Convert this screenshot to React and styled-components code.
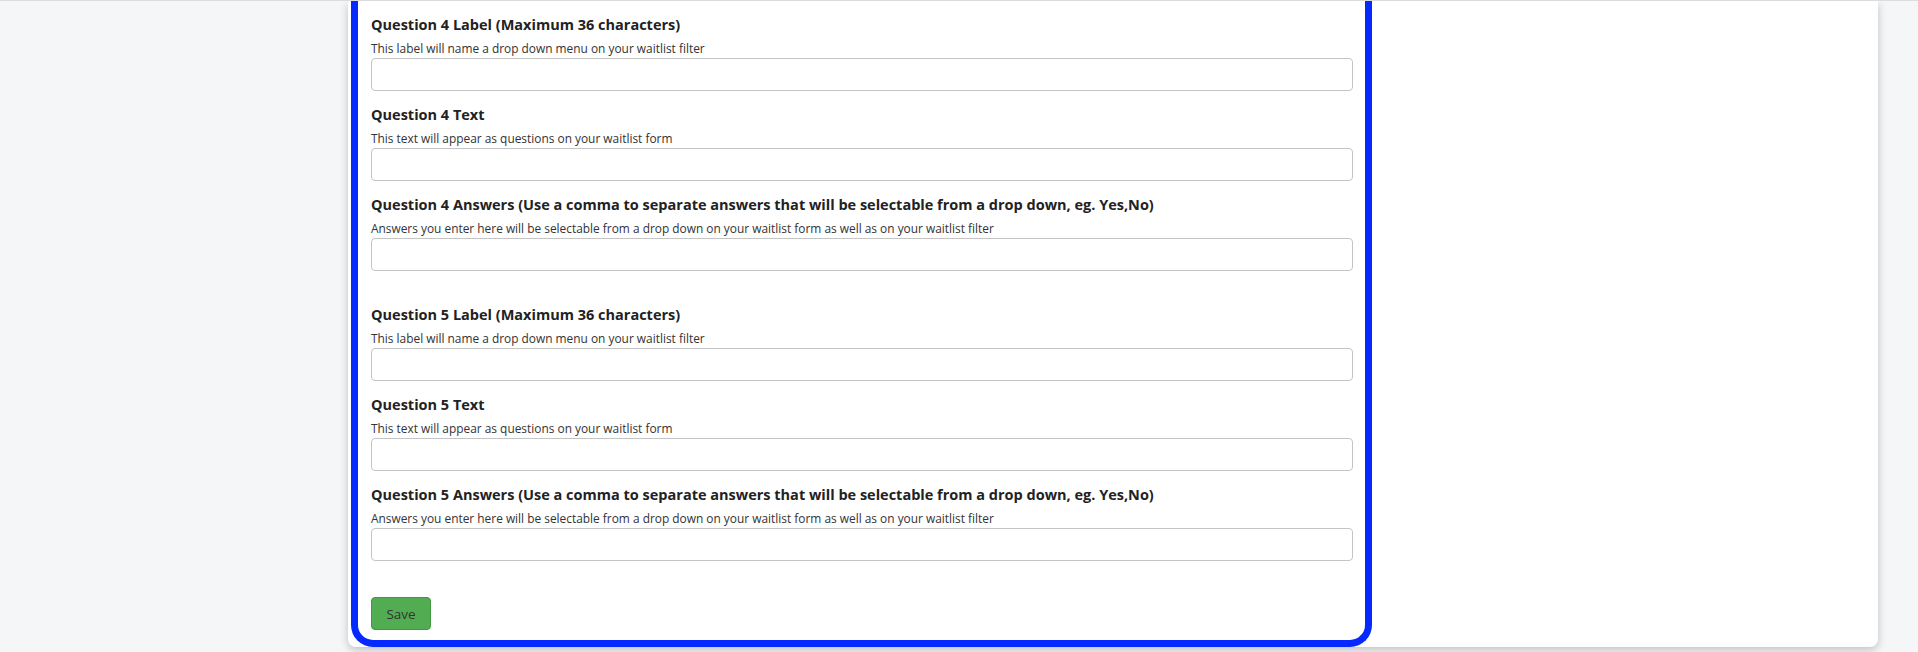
import React from "react";
import styled, { createGlobalStyle } from "styled-components";

const GlobalStyle = createGlobalStyle`
  html, body {
    margin: 0;
    padding: 0;
    background: #f5f6f8;
    font-family: "Open Sans", "Liberation Sans", sans-serif;
    color: #222;
  }
  * { box-sizing: border-box; }
`;

const TopRule = styled.div`
  height: 1px;
  background: #dcdcdc;
`;

const Page = styled.div`
  padding-left: 348px;
  overflow: hidden;
  height: 651px;
`;

const Card = styled.div`
  width: 1530px;
  background: #fff;
  border-radius: 0 0 8px 8px;
  box-shadow: 0 3px 8px rgba(0, 0, 0, 0.22);
  padding-left: 3px;
`;

const FormBox = styled.form`
  width: 1021px;
  margin-bottom: -7px;
  border: 7px solid #0529ff;
  border-top: none;
  border-radius: 0 0 22px 22px;
  background: #fff;
  padding: 13px 12px 10px 13px;
`;

const Section = styled.div`
  display: flex;
  flex-direction: column;
  gap: 13px;
  & + & {
    margin-top: 33px;
  }
`;

const Field = styled.div`
  display: flex;
  flex-direction: column;
`;

const Label = styled.label`
  font-size: 14.5px;
  font-weight: 700;
  line-height: 22px;
  color: #222;
`;

const Hint = styled.span`
  font-size: 11.9px;
  line-height: 16px;
  margin: 4px 0 2px;
  color: #333;
`;

const TextInput = styled.input`
  height: 33px;
  width: 100%;
  border: 1px solid #c4c4c4;
  border-radius: 4px;
  padding: 0 10px;
  font: inherit;
  font-size: 13px;
  outline: none;
`;

const SaveButton = styled.button`
  margin-top: 36px;
  width: 60px;
  height: 33px;
  background: #52ad52;
  border: 1px solid #3f9a3f;
  border-radius: 4px;
  color: #333;
  font-family: inherit;
  font-size: 13.5px;
  cursor: pointer;
`;

const questions = [4, 5];

const fieldsFor = (n) => [
  {
    label: `Question ${n} Label (Maximum 36 characters)`,
    hint: "This label will name a drop down menu on your waitlist filter",
  },
  {
    label: `Question ${n} Text`,
    hint: "This text will appear as questions on your waitlist form",
  },
  {
    label: `Question ${n} Answers (Use a comma to separate answers that will be selectable from a drop down, eg. Yes,No)`,
    hint: "Answers you enter here will be selectable from a drop down on your waitlist form as well as on your waitlist filter",
  },
];

export default function App() {
  return (
    <>
      <GlobalStyle />
      <TopRule />
      <Page>
        <Card>
          <FormBox onSubmit={(e) => e.preventDefault()}>
            {questions.map((n) => (
              <Section key={n}>
                {fieldsFor(n).map((f) => (
                  <Field key={f.label}>
                    <Label>{f.label}</Label>
                    <Hint>{f.hint}</Hint>
                    <TextInput type="text" />
                  </Field>
                ))}
              </Section>
            ))}
            <SaveButton type="submit">Save</SaveButton>
          </FormBox>
        </Card>
      </Page>
    </>
  );
}
